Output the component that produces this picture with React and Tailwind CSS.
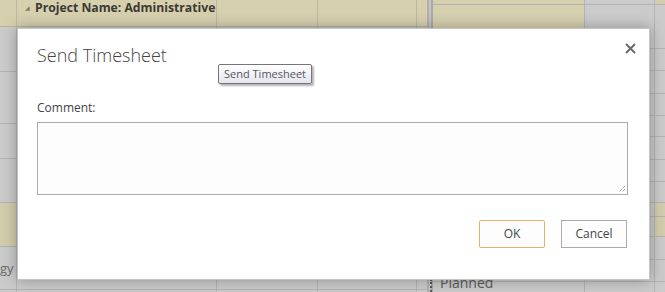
import React from "react";

const leftCols = ["w-[17px]", "w-[200px]", "w-[101px]", "w-[99px]", "w-[10px]"];

const leftRows = [
  { h: "h-[45px]", beige: false },
  { h: "h-[52px]", beige: false },
  { h: "h-[35px]", beige: false },
  { h: "h-[44px]", beige: false },
  { h: "h-[44px]", beige: true },
  { h: "h-[43px]", beige: false },
  { h: "h-[20px]", beige: false },
];

// row heights (border-box) for the timesheet grid on the right
const rightRows = [
  { h: "h-[5px]", beige: true },
  { h: "h-[44px]", beige: false },
  { h: "h-[22px]", beige: false },
  { h: "h-[23px]", beige: false },
  { h: "h-[22px]", beige: false },
  { h: "h-[21px]", beige: false },
  { h: "h-[23px]", beige: false },
  { h: "h-[22px]", beige: false },
  { h: "h-[21px]", beige: false },
  { h: "h-[14px]", beige: true },
  { h: "h-[20px]", beige: true },
  { h: "h-[23px]", beige: false },
  { h: "h-[22px]", beige: false },
  { h: "h-[22px]", beige: false },
];

const App = () => {
  return (
    <div
      className="relative w-[665px] h-[292px] overflow-hidden bg-[#cbcbcb]"
      style={{ fontFamily: '"Open Sans", "Noto Sans", sans-serif' }}
    >
      {/* BACKGROUND GRID */}
      <div className="flex h-full">
        {/* left table */}
        <div className="flex flex-col w-[427px]">
          <div className="flex shrink-0 h-[27px] bg-[#d6d0af] border-b border-[#b7b39c]">
            <div className="w-[17px] border-r border-[#bdb8a0]" />
            <div className="flex items-start gap-[5px] w-[200px] pl-[8px] pt-[0px] border-r border-[#bdb8a0]">
              <span className="mt-[5px] text-[6px] text-[#7a7868] leading-none">◢</span>
              <span className="text-[12.2px] font-bold text-[#3b3a33] whitespace-nowrap leading-[15px]">
                Project Name: Administrative
              </span>
            </div>
            <div className="w-[101px] border-r border-[#bdb8a0]" />
            <div className="w-[99px] border-r border-[#bdb8a0]" />
            <div className="w-[10px]" />
          </div>
          {leftRows.map((row, i) => (
            <div
              key={i}
              className={`flex shrink-0 ${row.h} border-b border-[#b3b3b3] ${
                row.beige ? "bg-[#d3cdad]" : "bg-[#cbcbcb]"
              }`}
            >
              {leftCols.map((w, j) => (
                <div
                  key={j}
                  className={`${w} relative ${j < 4 ? "border-r border-[#b3b3b3]" : ""}`}
                >
                  {i === 5 && j === 0 && (
                    <span className="absolute left-0 top-[15px] text-[13px] text-[#6a6a6a] leading-none">
                      gy
                    </span>
                  )}
                </div>
              ))}
            </div>
          ))}
        </div>

        {/* separator */}
        <div className="relative flex w-[6px]">
          <div className="w-[2px] bg-[#b0b0b0]" />
          <div className="w-[2px] bg-[#c4c4c4]" />
          <div className="w-[2px] bg-[#a9a9a9]" />
          <div className="absolute left-[3px] top-[279px] w-[2px] h-[13px] border-l-2 border-dotted border-[#555]" />
        </div>

        {/* right table */}
        <div className="flex flex-col flex-1">
          {rightRows.map((row, i) => (
            <div key={i} className={`flex shrink-0 ${row.h} border-b border-[#b3b3b3]`}>
              <div
                className={`relative w-[152px] border-r border-[#b3b3b3] ${
                  i < 2 ? "bg-[#d6d0af]" : "bg-[#cbcbcb]"
                }`}
              >
                {i === 12 && (
                  <span className="absolute z-10 left-[7px] top-[16px] text-[14px] text-[#5a5a5a] leading-none">
                    Planned
                  </span>
                )}
              </div>
              <div className="w-[70px] border-r border-[#b3b3b3] bg-[#cbcbcb]" />
              <div className={`flex-1 ${row.beige ? "bg-[#d3cdad]" : "bg-[#cbcbcb]"}`} />
            </div>
          ))}
        </div>
      </div>

      {/* DIALOG */}
      <div className="absolute z-20 left-[17px] top-[28px] w-[633px] h-[252px] bg-white border border-[#c4c4c4] shadow-[0_0_14px_rgba(0,0,0,0.3)] flex flex-col pl-[19px] pr-[21px]">
        <div className="flex items-start justify-between pt-[14px]">
          <h1 className="text-[18px] font-light text-[#444444] leading-[24px]">
            Send Timesheet
          </h1>
          <button className="mt-[0px] -mr-[8px] text-[#6b6b6b]">
            <svg width="11" height="11" viewBox="0 0 11 11">
              <path d="M1 1 L10 10 M10 1 L1 10" stroke="#6b6b6b" strokeWidth="2" />
            </svg>
          </button>
        </div>

        <label className="mt-[33px] text-[12px] text-[#444444] leading-[16px]">
          Comment:
        </label>

        <div className="relative mt-[6px] h-[73px] border border-[#ababab] bg-[#fdfdfd]">
          <svg
            className="absolute right-[1px] bottom-[1px]"
            width="8"
            height="8"
            viewBox="0 0 8 8"
          >
            <path d="M7 1 L1 7 M7 4 L4 7" stroke="#777" strokeWidth="1" strokeDasharray="1 1" />
          </svg>
        </div>

        <div className="flex justify-end gap-[16px] mt-[25px] pr-[1px]">
          <button className="w-[66px] h-[28px] border border-[#e2b463] rounded-[2px] bg-[#fdfdfd] text-[12px] text-[#444444]">
            OK
          </button>
          <button className="w-[66px] h-[28px] border border-[#ababab] bg-[#fdfdfd] text-[12px] text-[#444444]">
            Cancel
          </button>
        </div>
      </div>

      {/* TOOLTIP */}
      <div className="absolute z-30 left-[218px] top-[64px] h-[20px] px-[5px] flex items-center border border-[#767676] rounded-[2px] bg-gradient-to-b from-white to-[#e4e5f0] shadow-[2px_2px_2px_rgba(0,0,0,0.3)] text-[11px] text-[#575757] whitespace-nowrap">
        Send Timesheet
      </div>
    </div>
  );
};

export default App;
